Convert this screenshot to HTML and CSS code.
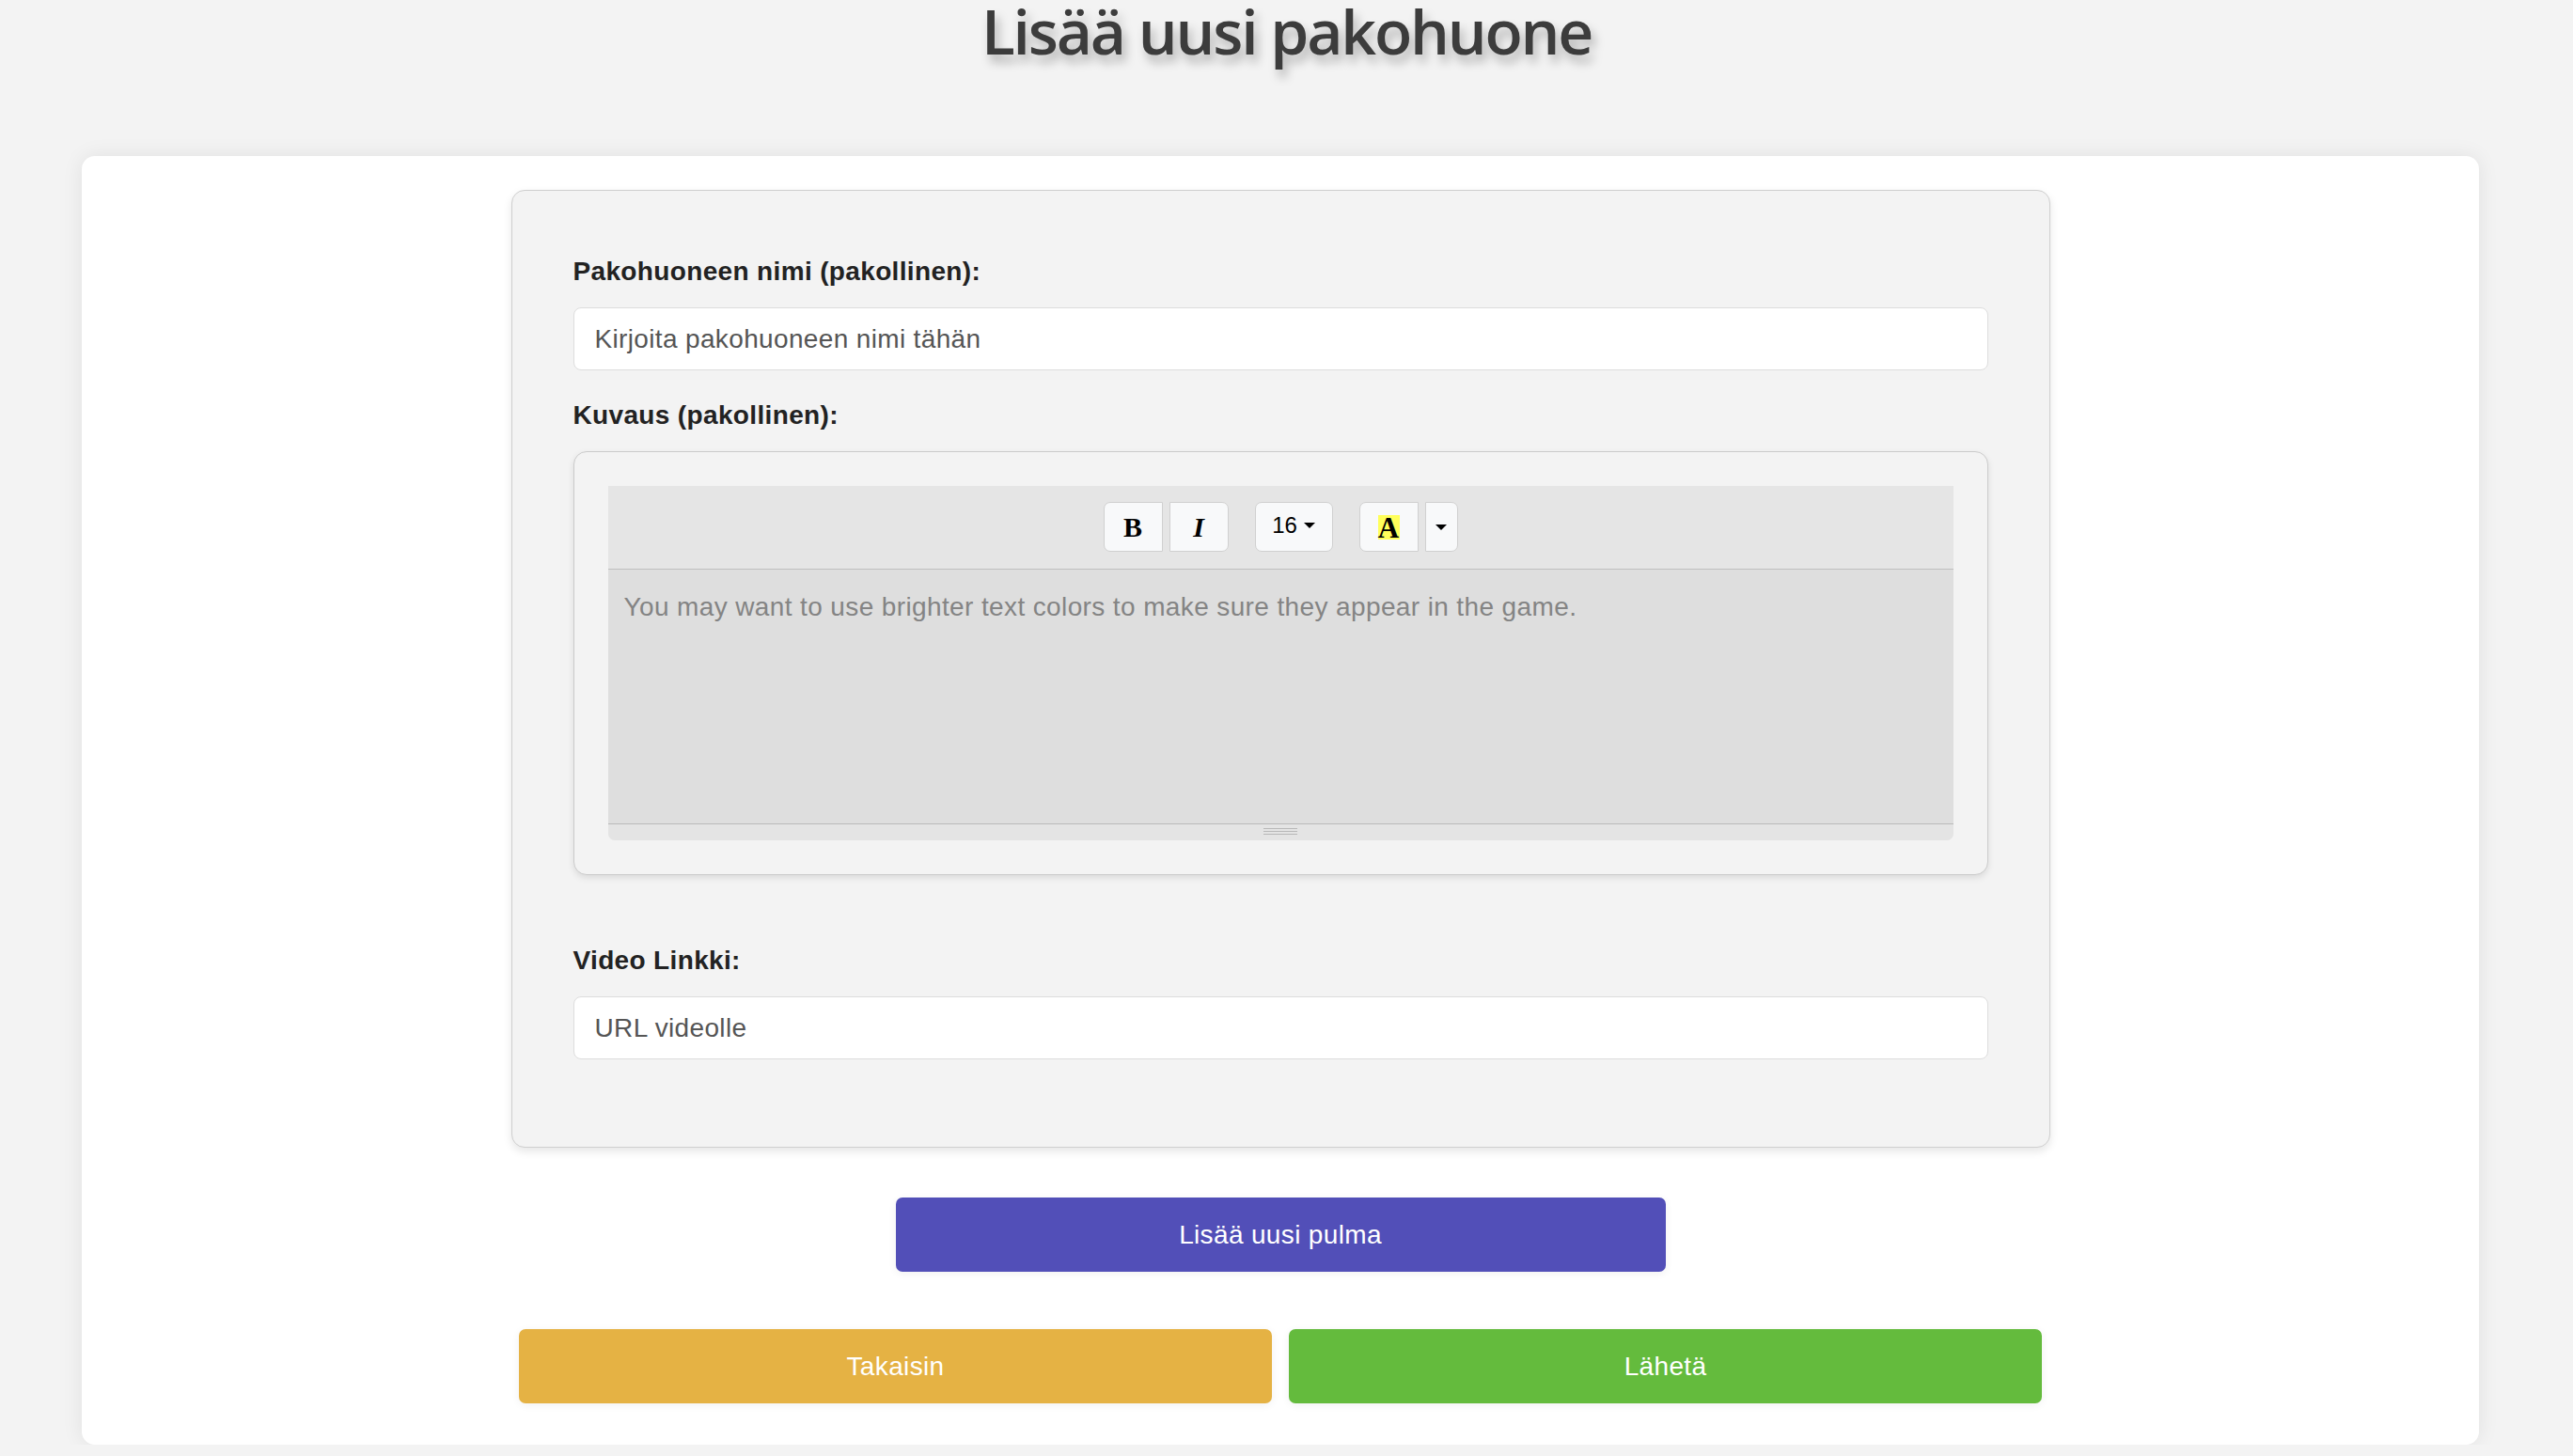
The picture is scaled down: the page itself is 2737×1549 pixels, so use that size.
FILE: index.html
```html
<!DOCTYPE html>
<html lang="fi">
<head>
<meta charset="utf-8">
<title>Lisää uusi pakohuone</title>
<link rel="stylesheet" href="styles.css">
</head>
<body>
<h1 class="page-title">Lisää uusi pakohuone</h1>
<main class="card">
  <form class="room-form">
    <label class="field-label" for="room-name">Pakohuoneen nimi (pakollinen):</label>
    <input class="text-input" id="room-name" type="text" placeholder="Kirjoita pakohuoneen nimi tähän">

    <label class="field-label">Kuvaus (pakollinen):</label>
    <div class="editor-frame">
      <div class="editor">
        <div class="toolbar">
          <div class="btn-group">
            <button type="button" class="tool tool-first"><span class="glyph-b">B</span></button>
            <button type="button" class="tool tool-last"><span class="glyph-i">I</span></button>
          </div>
          <div class="btn-group">
            <button type="button" class="tool tool-size">16<span class="caret"></span></button>
          </div>
          <div class="btn-group">
            <button type="button" class="tool tool-first"><span class="glyph-a">A</span></button>
            <button type="button" class="tool tool-caret tool-last"><span class="caret"></span></button>
          </div>
        </div>
        <div class="editable">You may want to use brighter text colors to make sure they appear in the game.</div>
        <div class="statusbar"><div class="resize-handle"></div></div>
      </div>
    </div>

    <label class="field-label video-label" for="video-url">Video Linkki:</label>
    <input class="text-input video-input" id="video-url" type="text" placeholder="URL videolle">
  </form>

  <button type="button" class="btn btn-puzzle">Lisää uusi pulma</button>

  <div class="actions">
    <button type="button" class="btn btn-back">Takaisin</button>
    <button type="button" class="btn btn-send">Lähetä</button>
  </div>
</main>
</body>
</html>
```

FILE: styles.css
```css
* {
  box-sizing: border-box;
}

html, body {
  margin: 0;
  padding: 0;
}

body {
  background: #f3f3f3;
  font-family: "Liberation Sans", Arial, sans-serif;
  color: #222;
}

.page-title {
  margin: 0;
  padding-top: 2px;
  font-family: "Open Sans", "Noto Sans", sans-serif;
  font-weight: 600;
  font-size: 66px;
  line-height: 60px;
  letter-spacing: -2.2px;
  text-align: center;
  color: #3c3c3c;
  text-shadow: 4px 8px 11px rgba(0, 0, 0, 0.27);
}

.card {
  display: block;
  margin: 104px 100px 0 87px;
  padding: 36px 0 44px;
  background: #ffffff;
  border-radius: 14px;
  box-shadow: 0 0 22px rgba(0, 0, 0, 0.08);
}

.room-form {
  width: 1637px;
  margin: 0 auto;
  padding: 70px 65px 93px;
  background: #f3f3f3;
  border: 1px solid #cfcfcf;
  border-radius: 14px;
  box-shadow: 0 4px 10px rgba(0, 0, 0, 0.1);
}

.field-label {
  display: block;
  font-weight: bold;
  font-size: 28px;
  line-height: 32px;
  letter-spacing: 0.35px;
  color: #222;
  margin-bottom: 22px;
}

.video-label {
  margin-top: 75px;
}

.text-input {
  display: block;
  width: 100%;
  height: 67px;
  margin: 0 0 32px;
  padding: 0 22px;
  background: #fff;
  border: 1px solid #dddddd;
  border-radius: 8px;
  font-family: "Liberation Sans", Arial, sans-serif;
  font-size: 28px;
  letter-spacing: 0.35px;
  color: #333;
  outline: none;
}

.text-input::placeholder {
  color: #555555;
  opacity: 1;
}

.video-input {
  margin-bottom: 0;
}

.editor-frame {
  padding: 36px;
  background: #f3f3f3;
  border: 1px solid #cbcbcb;
  border-radius: 14px;
  box-shadow: 0 3px 7px rgba(0, 0, 0, 0.1);
}

.editor {
  border-radius: 0 0 7px 7px;
  overflow: hidden;
}

.toolbar {
  display: flex;
  justify-content: center;
  gap: 28px;
  padding: 17px 0 18px;
  background: #e5e5e5;
  border-bottom: 1px solid #bfbfbf;
}

.btn-group {
  display: flex;
  gap: 7px;
}

.tool {
  display: flex;
  align-items: center;
  justify-content: center;
  width: 63px;
  height: 53px;
  padding: 0;
  margin: 0;
  background: #f8f9fa;
  border: 1px solid #d0d0d0;
  border-radius: 0;
  color: #000;
  font-family: "Liberation Sans", Arial, sans-serif;
}

.tool-first {
  border-radius: 7px 0 0 7px;
}

.tool-last {
  border-radius: 0 7px 7px 0;
}

.tool-size {
  width: 83px;
  border-radius: 7px;
  font-size: 24px;
  gap: 7px;
  padding-bottom: 3px;
}

.tool-caret {
  width: 35px;
}

.glyph-b,
.glyph-i,
.glyph-a {
  font-family: "Liberation Serif", "Times New Roman", serif;
  font-weight: bold;
  font-size: 30px;
  line-height: 1;
}

.glyph-i {
  font-style: italic;
}

.glyph-a {
  display: inline-block;
  width: 23px;
  height: 26px;
  line-height: 28px;
  font-size: 31px;
  text-align: center;
  background: #ffff5a;
}

.caret {
  display: inline-block;
  width: 0;
  height: 0;
  border-left: 6px solid transparent;
  border-right: 6px solid transparent;
  border-top: 6px solid #000;
}

.editable {
  height: 270px;
  padding: 20px 17px 0;
  background: #dedede;
  font-size: 28px;
  line-height: 40px;
  letter-spacing: 0.38px;
  color: #848484;
}

.statusbar {
  display: flex;
  justify-content: center;
  height: 18px;
  padding-top: 4px;
  background: #e4e4e4;
  border-top: 1px solid #bbbbbb;
}

.resize-handle {
  width: 36px;
  height: 7px;
  border-top: 1px solid #b8b8b8;
  border-bottom: 1px solid #b8b8b8;
  background: linear-gradient(#e4e4e4 0 2px, #b8b8b8 2px 3px, #e4e4e4 3px);
}

.btn {
  display: block;
  height: 79px;
  border: none;
  border-radius: 7px;
  color: #fff;
  font-family: "Liberation Sans", Arial, sans-serif;
  font-size: 28px;
  letter-spacing: 0.35px;
  box-shadow: 0 2px 10px rgba(0, 0, 0, 0.06);
  cursor: pointer;
}

.btn-puzzle {
  width: 819px;
  margin: 53px auto 0;
  background: #524fb8;
}

.actions {
  display: flex;
  gap: 18px;
  width: 1620px;
  margin: 61px auto 0;
}

.actions .btn {
  flex: 1;
}

.btn-back {
  background: #e5b244;
}

.btn-send {
  background: #64bb3d;
}
```
